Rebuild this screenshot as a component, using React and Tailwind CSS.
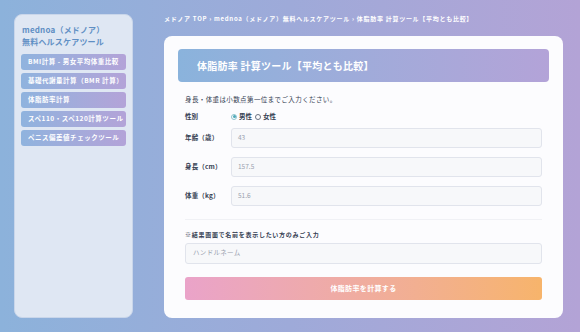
import React from 'react';

const font = { fontFamily: '"Noto Sans CJK JP", "Noto Sans", sans-serif' };

const menu = [
  'BMI計算 - 男女平均体重比較',
  '基礎代謝量計算（BMR 計算）',
  '体脂肪率計算',
  'スペ110・スペ120計算ツール',
  'ペニス偏差値チェックツール',
];

const Field = ({ label, value }) => (
  <div className="flex items-center h-[20px]">
    <span className="w-[46px] text-[6.5px] font-bold tracking-wide text-gray-700">{label}</span>
    <div className="flex-1 h-[20px] rounded-[3px] border border-[#e1e4ec] bg-[#f7f8fa] flex items-center px-[6px] text-[6.5px] text-gray-400">
      {value}
    </div>
  </div>
);

export default function App() {
  return (
    <div
      style={font}
      className="w-[580px] h-[332px] overflow-hidden bg-gradient-to-r from-[#8cb2db] via-[#9eaad9] to-[#b3a3d6] flex gap-[31px] pl-[14px] pt-[14px]"
    >
      <aside className="w-[119px] h-[304px] rounded-[8px] bg-[#dfe7f3] border border-[#c9d6ea] px-[6px] pt-[9px]">
        <div className="px-[1px] text-[8px] font-semibold leading-[12px] tracking-wide text-[#5f8fc4]">
          <div>mednoa（メドノア）</div>
          <div>無料ヘルスケアツール</div>
        </div>
        <ul className="mt-[6px] flex flex-col gap-[3px]">
          {menu.map(m => (
            <li
              key={m}
              className="h-[16px] rounded-[3px] bg-gradient-to-r from-[#8fb3de] to-[#b3a3d8] flex items-center pl-[7px] text-[6.5px] font-semibold tracking-[0.08em] text-white whitespace-nowrap"
            >
              {m}
            </li>
          ))}
        </ul>
      </aside>

      <div className="w-[399px]">
        <div className="h-[22px] text-[6px] font-bold tracking-[0.12em] text-white whitespace-nowrap">
          メドノア TOP › mednoa（メドノア）無料ヘルスケアツール › 体脂肪率 計算ツール【平均とも比較】
        </div>
        <div className="h-[282px] rounded-[8px] bg-[#fcfcfe] px-[14px] pt-[13px]">
          <div className="h-[33px] rounded-[4px] bg-gradient-to-r from-[#8ab3dc] to-[#b3a3d8] flex items-center pl-[19px] text-[10px] font-bold tracking-wide text-white">
            体脂肪率 計算ツール【平均とも比較】
          </div>
          <div className="px-[7px]">
            <p className="mt-[13px] text-[6.5px] tracking-[0.06em] text-gray-700">身長・体重は小数点第一位までご入力ください。</p>
            <div className="mt-[7px] flex items-center text-[6.5px] text-gray-700">
              <span className="w-[46px] font-bold">性別</span>
              <span className="w-[6px] h-[6px] rounded-full border border-[#8fc5cf] flex items-center justify-center mr-[2px]">
                <span className="w-[3px] h-[3px] rounded-full bg-[#4fa9b8]" />
              </span>
              <span className="font-bold mr-[3px]">男性</span>
              <span className="w-[6px] h-[6px] rounded-full border border-gray-500 mr-[2px]" />
              <span className="font-bold">女性</span>
            </div>
            <div className="mt-[6px] flex flex-col gap-[9px]">
              <Field label="年齢（歳）" value="43" />
              <Field label="身長（cm）" value="157.5" />
              <Field label="体重（kg）" value="51.6" />
            </div>
            <div className="mt-[13px] border-t border-[#f0f1f5]" />
            <p className="mt-[10px] text-[6px] font-bold tracking-[0.12em] text-gray-700">※結果画面で名前を表示したい方のみご入力</p>
            <div className="mt-[4px] h-[21px] rounded-[3px] border border-[#e1e4ec] bg-[#f7f8fa] flex items-center px-[7px] text-[6.5px] tracking-wider text-gray-400">
              ハンドルネーム
            </div>
            <button className="mt-[13px] w-full h-[23px] rounded-[3px] bg-gradient-to-r from-[#eaa3c9] to-[#f7b46b] text-[7px] font-bold tracking-wider text-white">
              体脂肪率を計算する
            </button>
          </div>
        </div>
      </div>
    </div>
  );
}
